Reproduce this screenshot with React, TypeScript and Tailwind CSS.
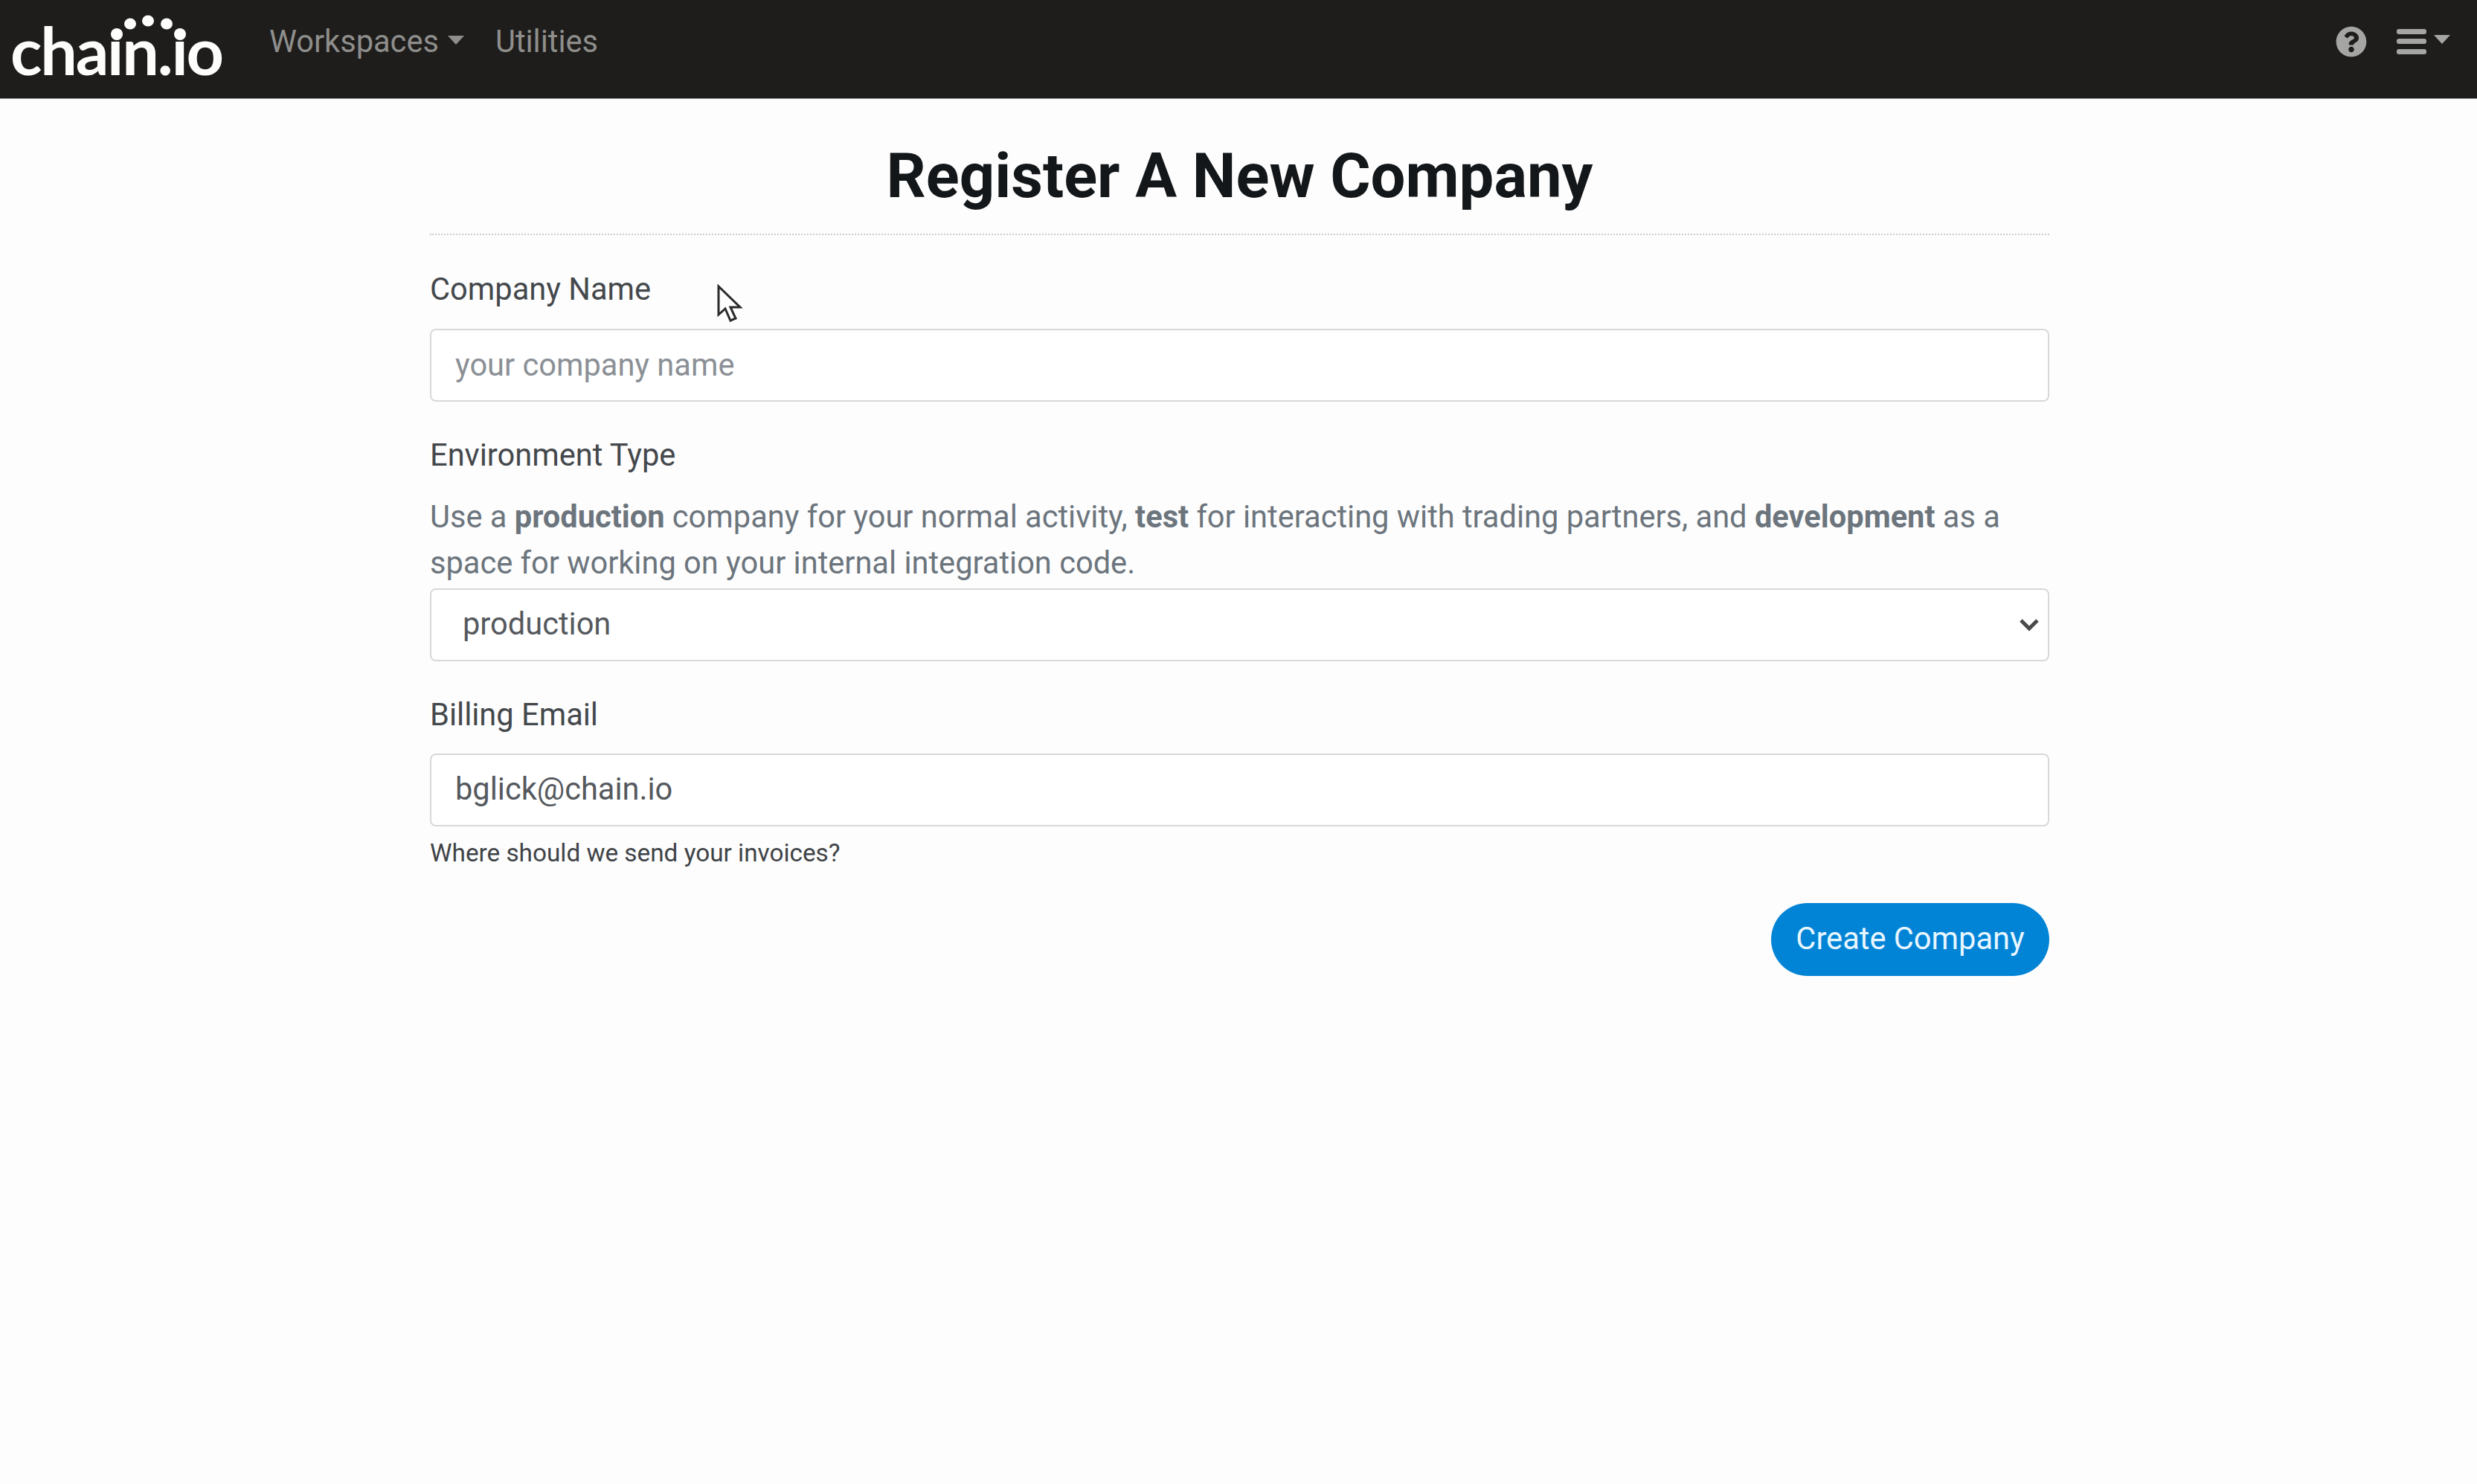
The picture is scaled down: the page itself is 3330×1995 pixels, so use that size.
import React from "react";

const Caret = ({ className }: { className?: string }) => (
  <svg className={className} width="22" height="12" viewBox="0 0 22 12"><path d="M0 0h22L11 12z" fill="currentColor" /></svg>
);

function Logo() {
  return (
    <div className="relative w-[304px] h-[133px] shrink-0">
      <span className="absolute left-[14px] top-[14px] font-['Lato',sans-serif] font-bold text-[88px] leading-[106px] tracking-[-2.2px] text-[#fdfdfb]">chain.io</span>
      <svg className="absolute left-0 top-0" width="304" height="133" viewBox="0 0 304 133" fill="#fdfdfb">
        <rect x="136" y="14" width="126" height="39" fill="#1e1d1b" />
        <ellipse cx="157" cy="46" rx="8" ry="8" />
        <ellipse cx="175" cy="32" rx="8" ry="7.500" />
        <ellipse cx="199" cy="28" rx="8" ry="7.500" />
        <ellipse cx="224" cy="32" rx="8" ry="7.500" />
        <ellipse cx="242" cy="46" rx="8" ry="8" />
      </svg>
    </div>
  );
}

function Field({ label, children }: { label: string; children: React.ReactNode }) {
  return (
    <div className="flex flex-col">
      <label className="text-[41.6px] leading-[60px] text-[#44484c]">{label}</label>
      {children}
    </div>
  );
}

export default function App() {
  return (
    <div className="relative min-h-[1995px] bg-[#fdfdfd] font-['Roboto',sans-serif]">
      <nav className="h-[133px] bg-[#1e1d1b] flex items-center pr-[34px] border-b border-[#8a8a88]">
        <Logo />
        <div className="flex items-center gap-[42px] text-[41.6px] text-[#8e8e8c] ml-[58px] mb-[20px]">
          <span className="flex items-center gap-[12px]">Workspaces <Caret className="mt-[-4px]" /></span>
          <span>Utilities</span>
        </div>
        <div className="ml-auto flex items-center gap-[40px] mb-[20px] text-[#a5a5a3]">
          <svg width="42" height="42" viewBox="0 0 512 512" fill="currentColor"><path d="M504 256c0 137-111 248-248 248S8 393 8 256 119 8 256 8s248 111 248 248zM262.700 90c-54.500 0-89.300 23-116.500 63.800-3.500 5.300-2.400 12.400 2.700 16.300l34.700 26.300c5.200 3.900 12.600 3 16.700-2.100 17.900-22.700 30.100-35.800 57.300-35.800 20.400 0 45.700 13.100 45.700 32.900 0 15-12.400 22.700-32.500 34-23.500 13.200-54.600 29.600-54.600 70.600V300c0 6.600 5.400 12 12 12h56c6.600 0 12-5.400 12-12v-1.300c0-28.400 83-29.600 83-106.700 0-58-60.200-102-116.500-102zM256 338c-25.400 0-46 20.600-46 46 0 25.400 20.600 46 46 46s46-20.600 46-46c0-25.400-20.600-46-46-46z" /></svg>
          <span className="flex items-center gap-[8px]">
            <svg width="40" height="36" viewBox="0 0 40 36" fill="currentColor"><rect y="1" width="40" height="7" rx="3" /><rect y="14" width="40" height="7" rx="3" /><rect y="28" width="40" height="7" rx="3" /></svg>
            <Caret className="mt-[-6px] w-[26px] text-[#a5a5a3]" />
          </span>
        </div>
      </nav>

      <main className="w-[2177px] ml-[578px]">
        <h1 className="text-center text-[83.2px] leading-[100px] font-bold text-[#14171a] pt-[54px] pb-[27px] border-b-2 border-dotted border-[#c9cbcd]">Register A New Company</h1>

        <div className="flex flex-col mt-[43px]">
          <Field label="Company Name">
            <input placeholder="your company name" className="mt-[23px] pb-[2px] h-[98px] w-full rounded-[8px] border-2 border-[#d6d8da] bg-white px-[32px] text-[41.6px] text-[#55595e] placeholder:text-[#8b9096] outline-none" />
          </Field>
          <div className="mt-[42px]">
            <Field label="Environment Type">
              <p className="mt-[22px] text-[41.6px] leading-[62.4px] text-[#6c757d]">
                Use a <b className="font-bold">production</b> company for your normal activity, <b className="font-bold">test</b> for interacting with trading partners, and <b className="font-bold">development</b> as a space for working on your internal integration code.
              </p>
              <div className="relative mt-[2px] pb-[2px] h-[98px] rounded-[8px] border-2 border-[#d6d8da] bg-white flex items-center pl-[42px] text-[41.6px] text-[#55595e]">
                production
                <svg className="absolute right-[12px] top-[38px]" width="26" height="18" viewBox="0 0 26 18" fill="none" stroke="#4a4a4a" strokeWidth="5"><path d="M2 3l11 11L24 3" /></svg>
              </div>
            </Field>
          </div>
          <div className="mt-[42px]">
            <Field label="Billing Email">
              <input defaultValue="bglick@chain.io" className="mt-[22px] pb-[2px] h-[98px] w-full rounded-[8px] border-2 border-[#d6d8da] bg-white px-[32px] text-[41.6px] text-[#55595e] outline-none" />
            </Field>
          </div>
          <p className="mt-[16px] text-[33.3px] leading-[40px] text-[#3f4347]">Where should we send your invoices?</p>
          <div className="flex justify-end mt-[47px]">
            <button className="h-[98px] w-[374px] pb-[2px] rounded-full bg-[#0284d6] text-[41.6px] text-[#e8f6ff]">Create Company</button>
          </div>
        </div>
      </main>

      <svg className="absolute left-[963px] top-[382px]" width="36" height="52" viewBox="0 0 36 52" fill="#fff" stroke="#2a2a2a" strokeWidth="3"><path d="M3 3v38l9-8 7 16 7-3-7-15h13z" /></svg>
    </div>
  );
}
